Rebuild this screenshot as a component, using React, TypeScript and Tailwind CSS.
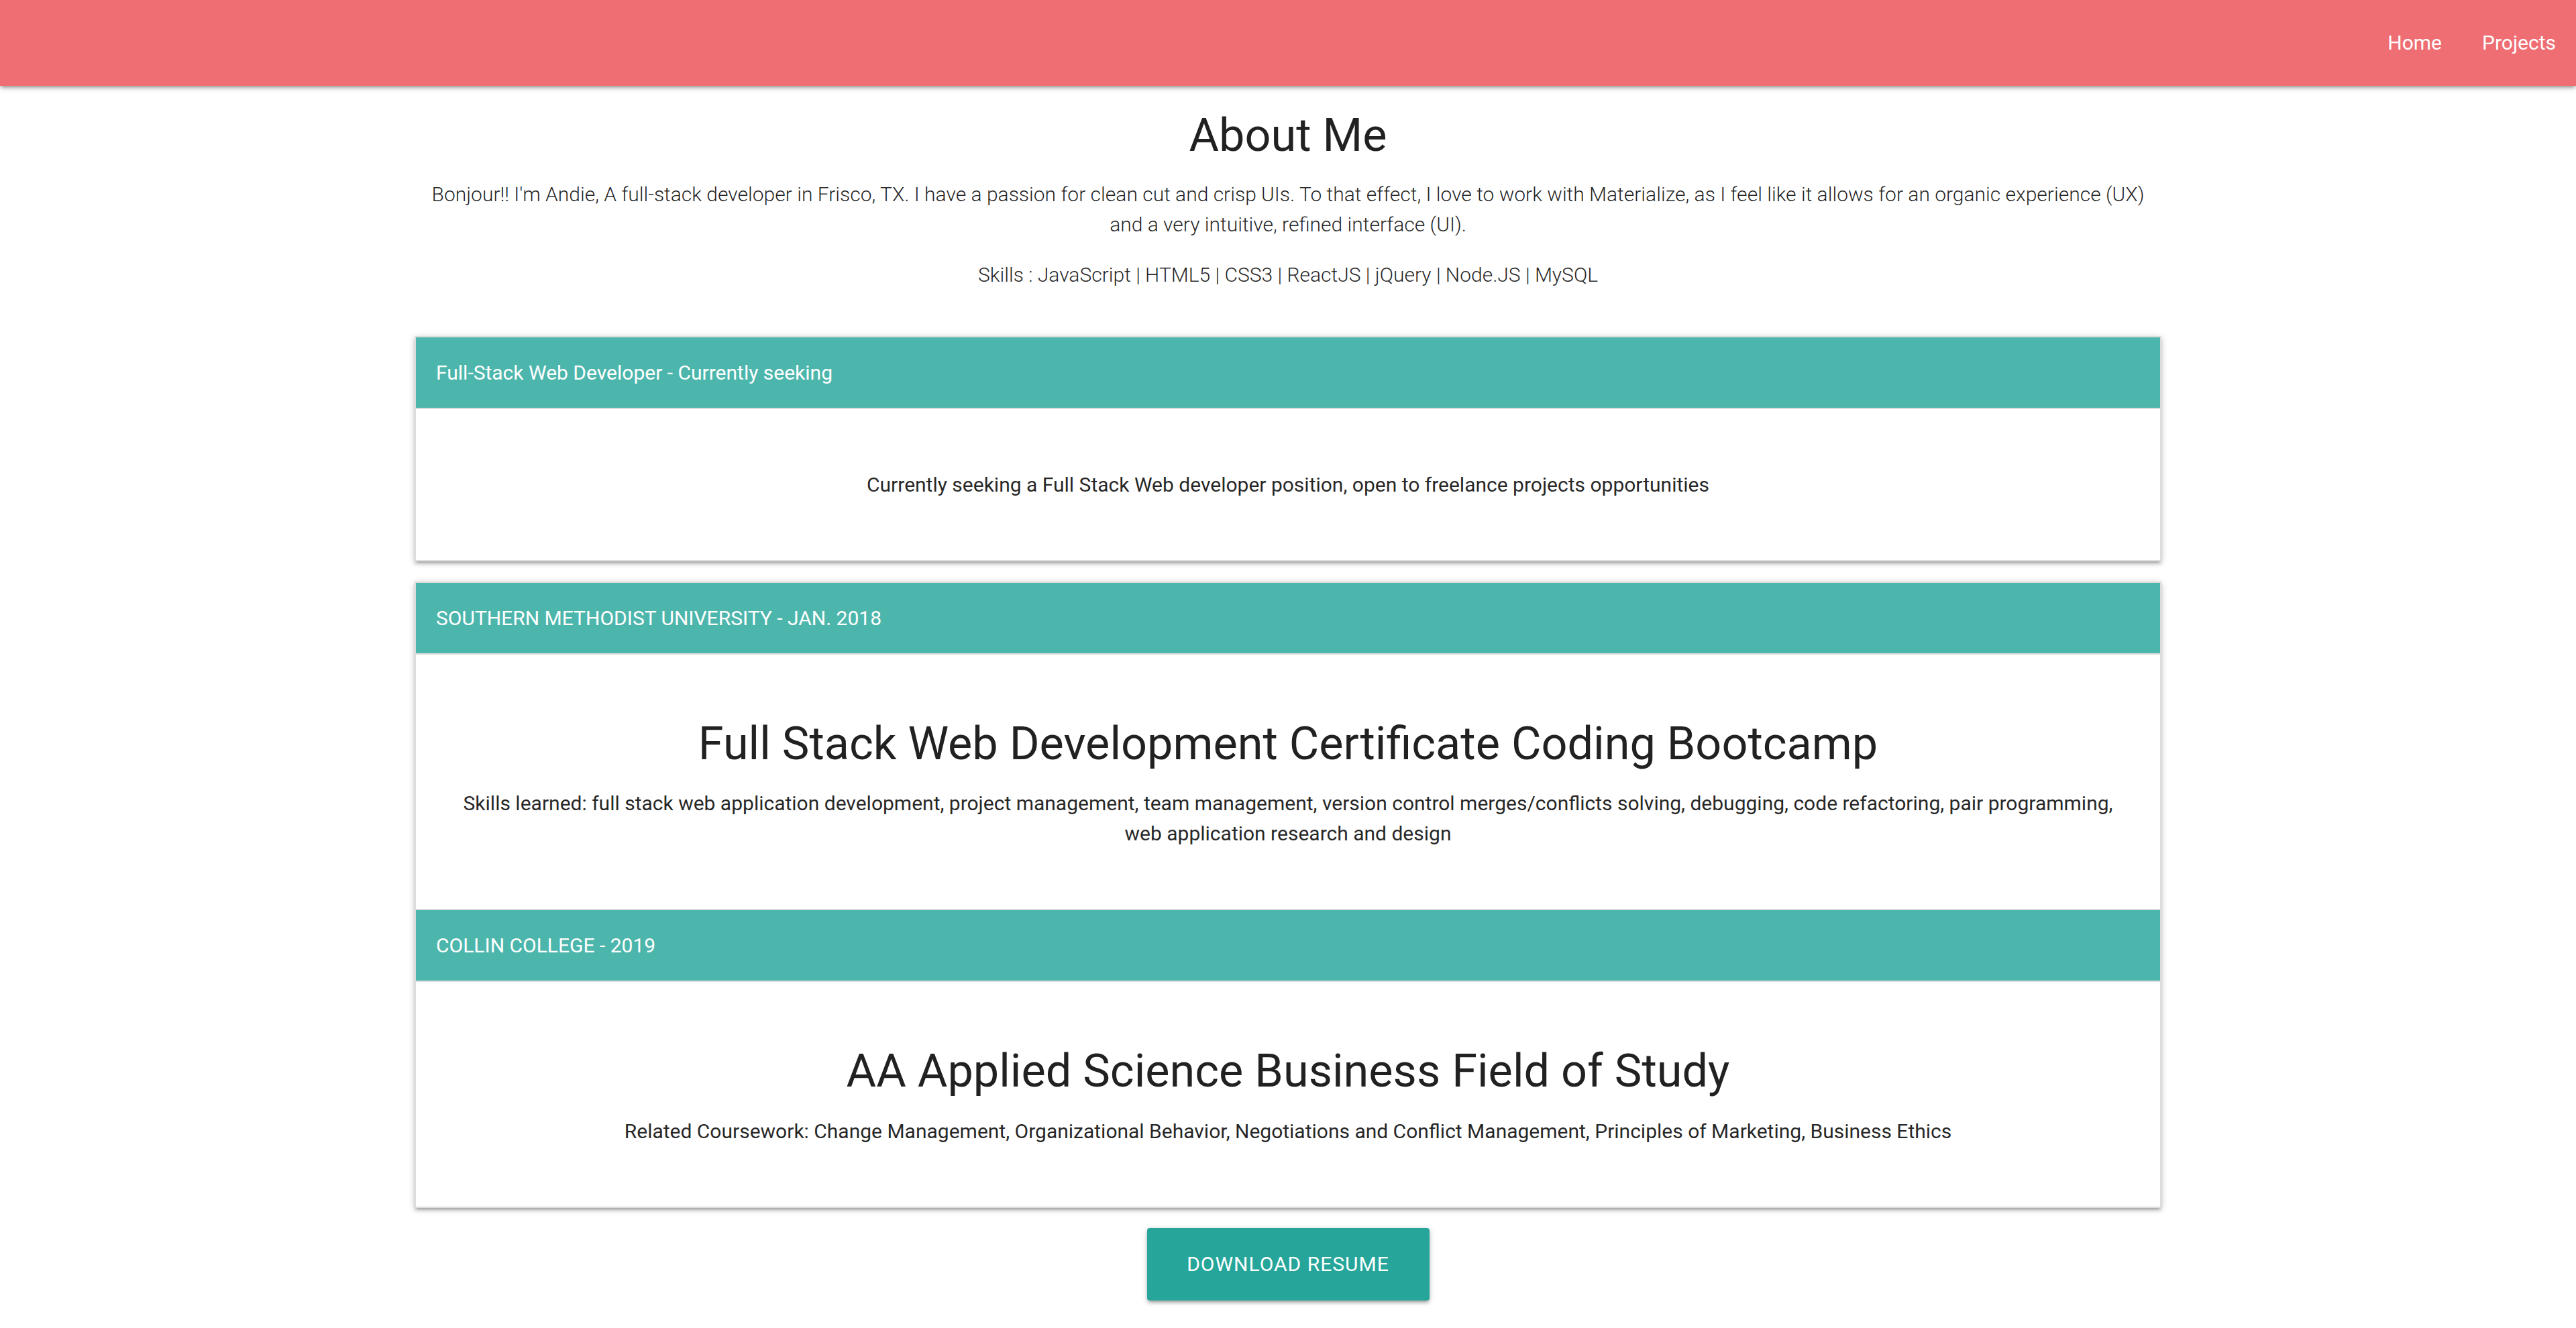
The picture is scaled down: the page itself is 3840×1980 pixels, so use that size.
import React from "react";

const cardShadow =
  "shadow-[0_4px_4px_0_rgba(0,0,0,0.14),0_6px_2px_-4px_rgba(0,0,0,0.12),0_2px_10px_0_rgba(0,0,0,0.2)]";

function Header({ children }: { children: React.ReactNode }) {
  return (
    <div className="bg-[#4db6ac] p-[30px] text-[30px] leading-[45px] text-white border-b-2 border-[#dddddd]">
      {children}
    </div>
  );
}

export default function App() {
  return (
    <div className="min-h-[1980px] bg-white font-['Roboto',sans-serif] text-[rgba(0,0,0,0.87)] flow-root">
      <nav className="h-[128px] bg-[#ee6e73] flex justify-end items-center shadow-[0_4px_4px_0_rgba(0,0,0,0.14),0_6px_2px_-4px_rgba(0,0,0,0.12),0_2px_10px_0_rgba(0,0,0,0.2)] relative z-10">
        <a className="px-[30px] text-[30px] leading-[128px] text-white" href="#">
          Home
        </a>
        <a className="px-[30px] text-[30px] leading-[128px] text-white" href="#">
          Projects
        </a>
      </nav>

      <main className="mx-auto w-[2604px] flow-root">
        <h4 className="mt-[37px] mb-[27px] text-center text-[68.4px] leading-[1.1] font-normal">
          About Me
        </h4>
        <p className="text-center text-[30px] leading-[45px] font-light px-[20px]">
          Bonjour!! I'm Andie, A full-stack developer in Frisco, TX. I have a passion for clean cut and crisp UIs. To that effect, I love to work with Materialize, as I feel like it allows for an organic experience (UX) and a very intuitive, refined interface (UI).
        </p>
        <p className="mt-[30px] text-center text-[30px] leading-[45px] font-light">
          Skills : JavaScript | HTML5 | CSS3 | ReactJS | jQuery | Node.JS | MySQL
        </p>

        <div className={`mt-[69px] border-x-2 border-t-2 border-[#dddddd] bg-white ${cardShadow}`}>
          <Header>Full-Stack Web Developer - Currently seeking</Header>
          <div className="px-[60px] py-[60px] border-b-2 border-[#dddddd] text-center">
            <p className="my-[30px] text-[30px] leading-[45px]">
              Currently seeking a Full Stack Web developer position, open to freelance projects opportunities
            </p>
          </div>
        </div>

        <div className={`mt-[30px] border-x-2 border-t-2 border-[#dddddd] bg-white ${cardShadow}`}>
          <Header>SOUTHERN METHODIST UNIVERSITY - JAN. 2018</Header>
          <div className="p-[60px] border-b-2 border-[#dddddd] text-center">
            <h4 className="mt-[36px] text-[68.4px] leading-[1.1] font-normal">
              Full Stack Web Development Certificate Coding Bootcamp
            </h4>
            <p className="mt-[28px] mb-[30px] text-[30px] leading-[45px]">
              Skills learned: full stack web application development, project management, team management, version control merges/conflicts solving, debugging, code refactoring, pair programming, web application research and design
            </p>
          </div>
          <Header>COLLIN COLLEGE - 2019</Header>
          <div className="p-[60px] border-b-2 border-[#dddddd] text-center">
            <h4 className="mt-[36px] text-[68.4px] leading-[1.1] font-normal">
              AA Applied Science Business Field of Study
            </h4>
            <p className="mt-[28px] mb-[30px] text-[30px] leading-[45px]">
              Related Coursework: Change Management, Organizational Behavior, Negotiations and Conflict Management, Principles of Marketing, Business Ethics
            </p>
          </div>
        </div>

        <div className="mt-[30px] flex justify-center">
          <button className="w-[421px] h-[108px] rounded-[4px] bg-[#26a69a] text-white text-[30px] tracking-[1px] uppercase shadow-[0_4px_4px_0_rgba(0,0,0,0.14),0_6px_2px_-4px_rgba(0,0,0,0.12),0_2px_10px_0_rgba(0,0,0,0.2)]">
            Download Resume
          </button>
        </div>
      </main>
    </div>
  );
}
